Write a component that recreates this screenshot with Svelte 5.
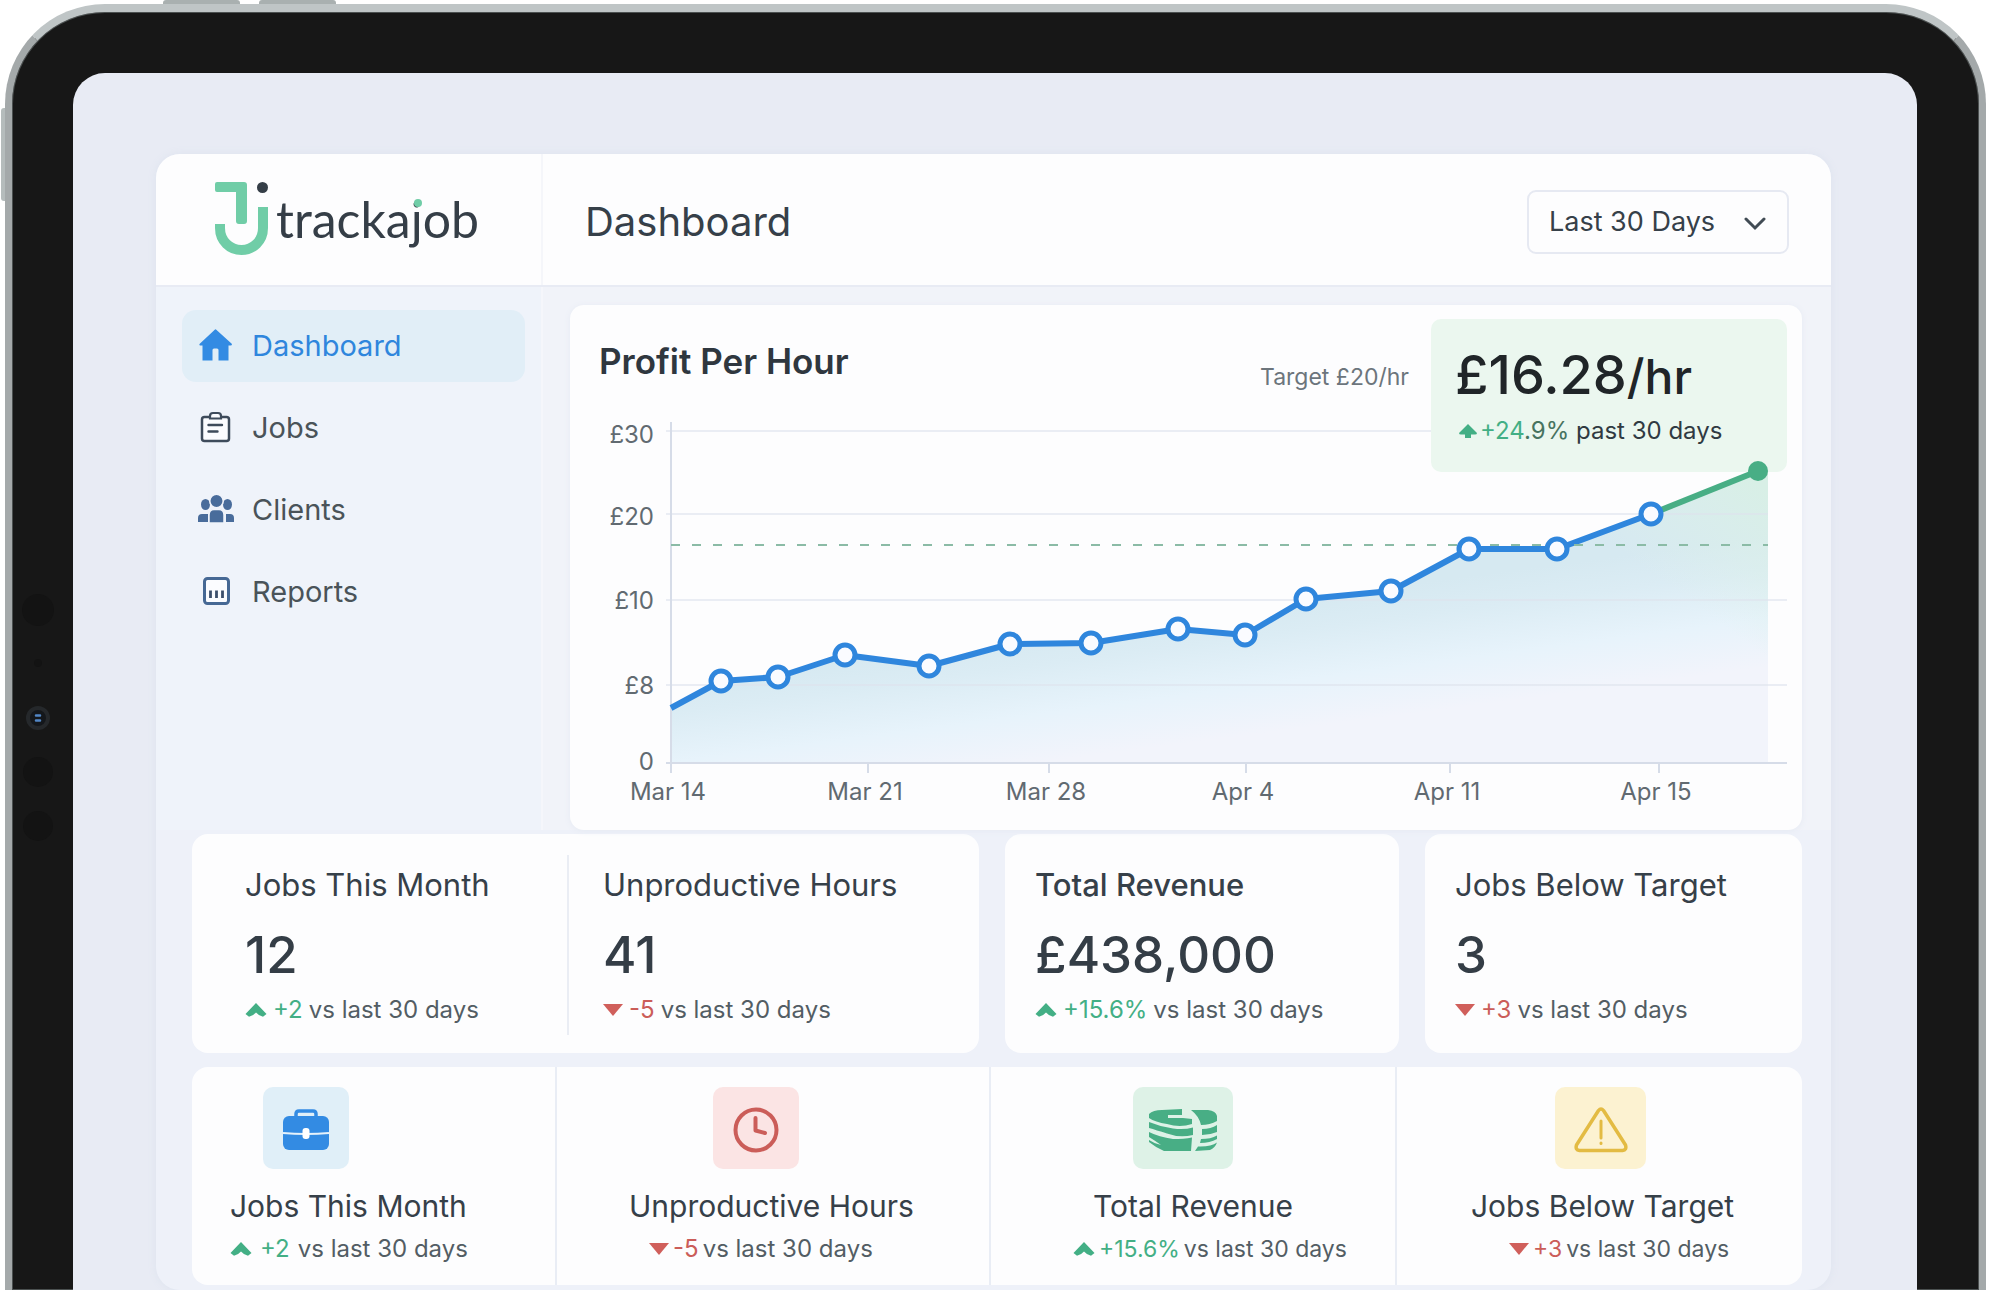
<script>
  const nav = [
    { id: 'dashboard', label: 'Dashboard', active: true },
    { id: 'jobs', label: 'Jobs' },
    { id: 'clients', label: 'Clients' },
    { id: 'reports', label: 'Reports' }
  ];

  const stats = [
    [
      { label: 'Jobs This Month', value: '12', up: true, change: '+2' },
      { label: 'Unproductive Hours', value: '41', up: false, change: '-5' }
    ],
    [{ label: 'Total Revenue', value: '£438,000', up: true, change: '+15.6%', strong: true }],
    [{ label: 'Jobs Below Target', value: '3', up: false, change: '+3' }]
  ];

  const tiles = [
    { id: 'month', label: 'Jobs This Month', up: true, change: '+2' },
    { id: 'hours', label: 'Unproductive Hours', up: false, change: '-5' },
    { id: 'revenue', label: 'Total Revenue', up: true, change: '+15.6%' },
    { id: 'target', label: 'Jobs Below Target', up: false, change: '+3' }
  ];

  const points = [
    [151, 376], [208, 372], [275, 350], [359, 361], [440, 339], [521, 338], [608, 324],
    [675, 330], [736, 294], [821, 286], [899, 244], [987, 244], [1081, 209]
  ];
  const start = [101, 403];
  const end = [1188, 166];
  const line = [start, ...points].map((p) => p.join(',')).join(' ');
  const area = `${line} ${end.join(',')} 1198,162 1198,458 101,458`;

  const yLabels = [
    { y: 137, text: '£30' }, { y: 219, text: '£20' }, { y: 303, text: '£10' },
    { y: 388, text: '£8' }, { y: 464, text: '0' }
  ];
  const grid = [{ y: 126, x: 861 }, { y: 209, x: 1198 }, { y: 295, x: 1217 }, { y: 380, x: 1217 }];
  const xLabels = [
    { x: 101, text: 'Mar 14' }, { x: 298, text: 'Mar 21' }, { x: 479, text: 'Mar 28' },
    { x: 676, text: 'Apr 4' }, { x: 880, text: 'Apr 11' }, { x: 1089, text: 'Apr 15' }
  ];

  let range = $state('30');
</script>

{#snippet delta(item)}
  <p class="delta">
    {#if item.up}
      <svg class="arrow" width="22" height="14" viewBox="0 0 22 14" aria-hidden="true"><path d="M11 0 21.500 11 18 13.800Q14 13 11 9.500 8 13 4 13.800L0.500 11Z" fill="#43af85" /></svg>
    {:else}
      <svg class="arrow" width="20" height="12" viewBox="0 0 20 12" aria-hidden="true"><path d="M0 0H20L10 12Z" fill="#d05f5b" /></svg>
    {/if}
    <span class={item.up ? 'up' : 'down'}>{item.change}</span>
    <span>vs last 30 days</span>
  </p>
{/snippet}

<div class="stage">
  <div class="device">
    <i class="key key-a"></i><i class="key key-b"></i><i class="key key-side"></i>
    <svg class="sensors" width="40" height="260" viewBox="0 0 40 260" aria-hidden="true">
      <g fill="#131313"><circle cx="20" cy="20" r="16" /><circle cx="20" cy="73" r="4" /><circle cx="20" cy="182" r="15" /><circle cx="20" cy="236" r="15" /></g>
      <circle cx="20" cy="128" r="10" fill="#14171b" stroke="#25282b" stroke-width="4" />
      <path d="M18 125.500h4M18 130.500h4" stroke="#5287c6" stroke-width="2.500" stroke-linecap="round" />
    </svg>
    <div class="screen">
      <div class="app">
        <header>
          <a class="brand" href="#home" aria-label="trackajob">
            <svg width="53" height="73" viewBox="0 0 53 73" fill="none" aria-hidden="true">
              <path d="M2 0H29Q32 0 32 3V39Q32 42 29 42H24Q21 42 21 39V10H2Q0 10 0 8V2Q0 0 2 0Z" fill="#70cda7" />
              <path d="M5 42V46C5 59 15 68 26.500 68S48 59 48 46V25" stroke="#70cda7" stroke-width="10" />
              <circle cx="47.500" cy="5.500" r="5.500" fill="#353e47" />
            </svg>
            <span class="word">tracka<span class="j">j</span>ob</span>
          </a>
          <div class="bar">
            <h1>Dashboard</h1>
            <div class="picker">
              <select aria-label="Date range" bind:value={range}>
                <option value="30">Last 30 Days</option>
                <option value="60">Last 60 Days</option>
                <option value="90">Last 90 Days</option>
              </select>
              <svg width="22" height="14" viewBox="0 0 22 14" aria-hidden="true"><path d="M2 2 11 11 20 2" fill="none" stroke="#414b54" stroke-width="3" stroke-linecap="round" /></svg>
            </div>
          </div>
        </header>

        <div class="body">
          <nav aria-label="Main">
            {#each nav as item}
              <a href={'#' + item.id} class:active={item.active}>
                <svg width="36" height="36" viewBox="0 0 36 36" fill="none" aria-hidden="true">
                  {#if item.id === 'dashboard'}
                    <path d="M17 1.500Q17.500 1 18 1.500L34 16Q34 17.500 32.500 17.500H30.500V32.500H20.500V22Q20.500 20.500 19 20.500H16Q14.500 20.500 14.500 22V32.500H4.500V17.500H2Q1 17 1.500 16Z" fill="#338be3" />
                  {:else if item.id === 'jobs'}
                    <rect x="4" y="7" width="27" height="24" rx="2.500" fill="#fbfcff" stroke="#3e4b5b" stroke-width="2.500" />
                    <path d="M12 8.500V6Q12 3 15 3H20Q23 3 23 6V8.500Z" fill="#fbfcff" stroke="#3e4b5b" stroke-width="2.200" />
                    <path d="M10.500 15H24M10.500 21.500H19.500" stroke="#3e4b5b" stroke-width="2.400" stroke-linecap="round" />
                  {:else if item.id === 'clients'}
                    <g fill="#496c9b">
                      <ellipse cx="7.500" cy="12.500" rx="4.500" ry="5.500" /><ellipse cx="29.500" cy="12.500" rx="4.500" ry="5.500" />
                      <path d="M0 30V26Q0 22 4 22H10V30ZM28 30V22H32Q36 22 36 26V30Z" />
                      <path d="M11 31V23Q11 17.500 16 17.500H21Q26 17.500 26 23V31Z" stroke="#f0f3fa" stroke-width="1.500" />
                      <circle cx="18.500" cy="9" r="6.700" stroke="#f0f3fa" stroke-width="1.500" />
                    </g>
                  {:else}
                    <rect x="6.500" y="4.500" width="24" height="25" rx="3" fill="#fbfcff" stroke="#466894" stroke-width="3" />
                    <path d="M12.500 16.500V24M18.500 16.500V24M24.500 16.500V24" stroke="#3c4f6c" stroke-width="2.800" />
                  {/if}
                </svg>
                {item.label}
              </a>
            {/each}
          </nav>

          <main>
            <section class="chart" aria-labelledby="profit">
              <div class="chart-head">
                <h2 id="profit">Profit Per Hour</h2>
                <span>Target £20/hr</span>
              </div>
              <div class="callout">
                <p class="rate">£16.28<span>/hr</span></p>
                <p class="trend">
                  <svg width="20" height="16" viewBox="0 0 20 16" aria-hidden="true"><path d="M10 1 19 10Q19 11.500 17 11.500H13V15H7V11.500H3Q1 11.500 1 10Z" fill="#43af85" /></svg><span class="up">+24</span><span class="rest">.9%</span> past 30 days
                </p>
              </div>
              <svg class="plot" viewBox="0 100 1232 425" role="img" aria-label="Profit per hour from Mar 14 to Apr 15">
                <defs>
                  <linearGradient id="wash" gradientUnits="userSpaceOnUse" x1="430" y1="300" x2="451" y2="460">
                    <stop offset="0.200" stop-color="#d6e9f1" /><stop offset="0.400" stop-color="#dbecf4" />
                    <stop offset="0.700" stop-color="#e7f3fb" /><stop offset="1" stop-color="#f2f4fb" />
                  </linearGradient>
                  <linearGradient id="glow" gradientUnits="userSpaceOnUse" x1="1190" y1="180" x2="1110" y2="290">
                    <stop offset="0" stop-color="#d8efe6" /><stop offset="1" stop-color="#def1ea" stop-opacity="0" />
                  </linearGradient>
                </defs>
                <polygon points={area} fill="url(#wash)" />
                <polygon points={area} fill="url(#glow)" />
                <g stroke="#dde2ed" stroke-opacity="0.600" stroke-width="2">
                  {#each grid as g}<path d={`M96 ${g.y}H${g.x}`} />{/each}
                </g>
                <path d="M101 117V467M96 458H1217" stroke="#d6dce8" stroke-width="2" />
                {#each xLabels as t}
                  <path d={`M${t.x} 458V468`} stroke="#d6dce8" stroke-width="2" />
                  <text x={t.x - 3} y="495" text-anchor="middle">{t.text}</text>
                {/each}
                {#each yLabels as t}<text x="84" y={t.y + 1} text-anchor="end">{t.text}</text>{/each}
                <path d="M1081 209L1188 166" stroke="#48ae85" stroke-width="6" />
                <polyline points={line} fill="none" stroke="#2f86dd" stroke-width="6" stroke-linejoin="round" />
                <path d="M101 240H1198" stroke="#8bbba6" stroke-width="2" stroke-dasharray="9 12" />
                {#each points as p}<circle cx={p[0]} cy={p[1]} r="10" fill="#fafbff" stroke="#2f86dd" stroke-width="5" />{/each}
                <circle cx={end[0]} cy={end[1]} r="10" fill="#48ae85" />
              </svg>
            </section>
          </main>
        </div>

        <div class="stats">
          {#each stats as card}
            <section class="card" class:pair={card.length > 1}>
              {#each card as item}
                <div class="stat" class:strong={item.strong}>
                  <h3>{item.label}</h3>
                  <p class="value">{item.value}</p>
                  {@render delta(item)}
                </div>
              {/each}
            </section>
          {/each}
        </div>

        <section class="tiles">
          {#each tiles as item}
            <div class="cell {item.id}">
              <div class="badge">
                {#if item.id === 'month'}
                  <svg width="48" height="42" viewBox="0 0 48 42" aria-hidden="true">
                    <path d="M14 8V5Q14 2 17 2H31Q34 2 34 5V8" fill="none" stroke="#338be3" stroke-width="3.500" />
                    <rect x="1" y="7" width="46" height="34" rx="6" fill="#338be3" />
                    <path d="M1 24Q12 25 24 25T47 24" fill="none" stroke="#e6f2fb" stroke-width="2" /><rect x="20.500" y="19" width="7" height="11" rx="3" fill="#fff" />
                  </svg>
                {:else if item.id === 'hours'}
                  <svg width="46" height="46" viewBox="0 0 46 46" fill="none" stroke="#cb5d59" aria-hidden="true">
                    <circle cx="23" cy="23" r="20.500" stroke-width="4" /><path d="M22.500 11V23.500L32 26" stroke-width="4" stroke-linecap="round" stroke-linejoin="round" />
                  </svg>
                {:else if item.id === 'revenue'}
                  <svg width="70" height="44" viewBox="0 0 70 44" fill="#48ae85" aria-hidden="true">
                    <path d="M1 6Q5 2 14 2L34 1V7H20V10H35L44 11V16Q32 20 19 16 7 14 1 10Z" />
                    <path d="M1 14Q13 19 25 20.500 36 22 45 19.500L45 27Q31 30 19 25.500 8 22 1 20Z" />
                    <path d="M1 24Q11 29 25 31 36 31 44 29.500L43 43H16Q7 39 1 34V32Q7 36 13 37 6 32 1 29Z" />
                    <path d="M43 2H60Q68 3 69 8V13Q62 17 53 17 51 8 43 2ZM54 21Q63 21 69 17V24Q62 27 54 27ZM53 31Q63 31 69 27.500V31Q62 35 52 35ZM50 38.500Q63 39 69 34.500 67 40 62 42L47 43Z" />
                  </svg>
                {:else}
                  <svg width="54" height="46" viewBox="0 0 54 46" fill="none" stroke="#e3bb43" stroke-linecap="round" stroke-linejoin="round" aria-hidden="true">
                    <path d="M24.500 3.500Q27 0.500 29.500 3.500L51.500 38Q53 43 48.500 43.500H5.500Q1 43 2.500 38Z" stroke-width="3.500" /><path d="M27 14V31M27 36V36.500" stroke-width="3" />
                  </svg>
                {/if}
              </div>
              <h3>{item.label}</h3>
              {@render delta(item)}
            </div>
          {/each}
        </section>
      </div>
    </div>
  </div>
</div>

<style>
  :global(body) { margin: 0; background: #fff; }
  * { box-sizing: border-box; }
  h1, h2, h3, p { margin: 0; font-weight: 400; }
  a { color: inherit; text-decoration: none; }
  .stage { padding: 4px 14px 0 5px; font-family: Inter, "Open Sans", sans-serif; color: #364049; overflow: hidden; }
  .device {
    position: relative; padding: 61px 62px 0 61px; background: #171717;
    border: 7px solid #a4a9aa; border-top: 8px solid #bfc5c6; border-bottom: 0; border-radius: 100px 100px 0 0;
    box-shadow: inset 0 0 0 1px #4b5050;
  }
  .key { position: absolute; top: -12px; width: 77px; height: 4px; background: #a9b0b0; border-radius: 3px 3px 0 0; }
  .key-a { left: 151px; }
  .key-b { left: 247px; }
  .key-side { top: 96px; left: -11px; width: 4px; height: 93px; background: #b5bcbc; border-radius: 3px 0 0 3px; }
  .sensors { position: absolute; left: 6px; top: 578px; }
  .screen { padding: 81px 86px 0 83px; background: #e8ebf4; border-radius: 32px 32px 0 0; }
  .app { padding-bottom: 5px; background: #eef1f9; border-radius: 24px; box-shadow: 0 0 8px #dde3ee; }
  header { display: grid; grid-template-columns: 387px 1fr; height: 133px; background: #fdfdfe; border-bottom: 2px solid #e8ebf4; border-radius: 24px 24px 0 0; }
  .brand { display: flex; align-items: center; gap: 8px; padding: 0 0 2px 59px; border-right: 2px solid #f5f6fa; }
  .word { font: 400 50px/56px Lato, sans-serif; color: #353e47; }
  .j { position: relative; }
  .j::after { content: ""; position: absolute; left: 3px; top: 10px; width: 8px; height: 8px; border-radius: 50%; background: #70cda7; }
  .bar { display: flex; align-items: center; justify-content: space-between; padding: 4px 42px 0; }
  h1 { font-size: 40px; line-height: 48px; }
  .picker { position: relative; width: 262px; }
  .picker svg { position: absolute; right: 23px; top: 27px; pointer-events: none; }
  select {
    display: block; width: 100%; height: 64px; padding: 0 50px 0 20px; appearance: none; background: #fdfdfe; color: #364049;
    border: 2px solid #e6e9f2; border-radius: 9px; font: 400 27px/32px Inter, sans-serif;
  }
  .body { display: grid; grid-template-columns: 387px 1fr; }
  nav { display: flex; flex-direction: column; gap: 10px; padding: 23px 16px 0 26px; background: #eff3fa; border-right: 2px solid #f5f6fb; }
  nav a { display: flex; align-items: center; gap: 18px; height: 72px; padding-left: 16px; border-radius: 14px; font-size: 29px; line-height: 36px; color: #4a5359; }
  nav a.active { background: #e1eef7; color: #2f86dd; }
  main { padding: 18px 29px 0 27px; background: #f1f3f9; }
  .chart { position: relative; padding-top: 36px; background: #fdfdfe; border-radius: 14px; box-shadow: 0 1px 6px #e6eaf3; }
  .chart-head { display: flex; justify-content: space-between; align-items: flex-end; height: 40px; margin-bottom: 24px; padding: 0 393px 0 29px; }
  .chart-head span { margin-bottom: -12px; font-size: 23px; line-height: 32px; color: #6c757c; }
  h2 { font-size: 35px; line-height: 40px; font-weight: 600; color: #2f373f; }
  .callout { position: absolute; top: 14px; right: 15px; width: 356px; height: 153px; padding: 26px 0 0 24px; background: #ebf7ef; border-radius: 10px; }
  .rate { font-size: 54px; line-height: 60px; font-weight: 500; color: #202528; }
  .rate span { font-size: 48px; }
  .trend { margin-top: 8px; font-size: 24px; line-height: 32px; color: #303a42; white-space: nowrap; }
  .trend svg { margin: 0 2px 0 3px; }
  .rest { color: #47735f; }
  .plot { position: relative; display: block; width: 100%; }
  .plot text { font-size: 24px; fill: #616a71; }
  .up { color: #43af85; }
  .down { color: #cb5d59; }
  .stats { display: grid; grid-template-columns: 787fr 394fr 377fr; gap: 26px; margin-top: 4px; padding: 0 29px 0 36px; }
  .card { padding: 21px 0 18px; background: #fdfdfe; border-radius: 16px; }
  .pair { display: grid; grid-template-columns: 375fr 412fr; }
  .stat { padding: 12px 0 9px 30px; }
  .pair .stat { padding-left: 53px; }
  .pair .stat + .stat { padding-left: 34px; border-left: 2px solid #eaedf4; }
  h3 { font-size: 31px; line-height: 36px; color: #364049; white-space: nowrap; }
  .strong h3 { font-weight: 500; }
  .value { margin: 22px 0 9px; font-size: 51px; line-height: 60px; font-weight: 500; color: #343d46; }
  .delta { display: flex; align-items: center; gap: 6px; font-size: 24px; line-height: 32px; color: #535d64; white-space: nowrap; }
  .tiles { display: grid; grid-template-columns: 363fr 434fr 406fr 407fr; margin: 14px 29px 0 36px; background: #fdfdfe; border-radius: 16px; }
  .cell { padding: 20px 0 20px; }
  .cell + .cell { border-left: 2px solid #e9edf5; }
  .cell h3 { margin: 19px 0 9px; font-size: 30px; }
  .cell .delta { gap: 4px; }
  .badge { display: flex; align-items: center; justify-content: center; width: 86px; height: 82px; padding-top: 4px; border-radius: 10px; }
  .month { padding-left: 38px; }
  .month .badge { margin-left: 33px; background: #e0eff8; }
  .month .delta { gap: 8px; }
  .hours { padding-left: 72px; }
  .hours .badge { margin-left: 84px; background: #fbe4e4; }
  .hours .delta { margin-left: 20px; }
  .revenue { padding-left: 82px; }
  .revenue .badge { width: 100px; margin-left: 60px; background: #def2e7; }
  .revenue h3 { margin-left: 20px; }
  .revenue .delta { font-size: 23px; }
  .target { padding-left: 74px; }
  .target .badge { width: 91px; margin-left: 84px; background: #fcf2d1; }
  .target .delta { margin-left: 38px; font-size: 23px; }
</style>
